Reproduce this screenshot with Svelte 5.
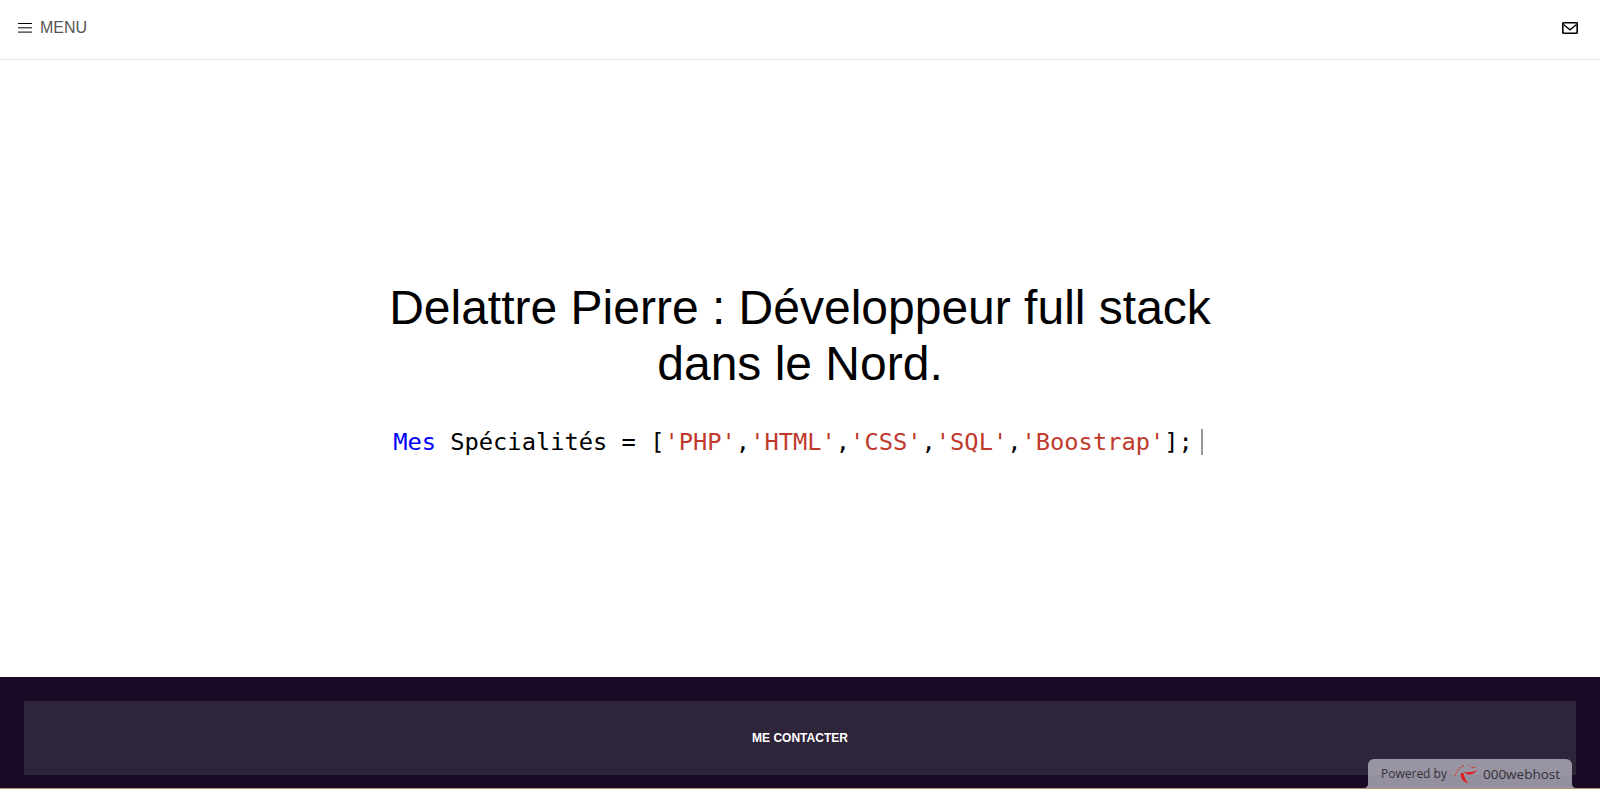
<script>
  // code line tokens
  const items = ['PHP', 'HTML', 'CSS', 'SQL', 'Boostrap'];
</script>

<div class="page">
  <header class="topbar">
    <button class="menu" type="button">
      <svg class="menu__icon" width="14" height="10" viewBox="0 0 14 10" aria-hidden="true">
        <path d="M0 .5h14M0 4.800h14M0 9.100h14" stroke="#000" stroke-width="1" fill="none" />
      </svg>
      <span>MENU</span>
    </button>
    <svg class="mail" width="16" height="12" viewBox="0 0 16 12" aria-hidden="true">
      <rect x=".8" y=".8" width="14.400" height="10.400" rx=".6" fill="none" stroke="#000" stroke-width="1.600" />
      <path d="M1.500 2.500 8 7.800l6.500-5.300" fill="none" stroke="#000" stroke-width="1.400" />
    </svg>
  </header>

  <main class="hero">
    <h1 class="hero__title">Delattre Pierre : Développeur full stack dans le Nord.</h1>
    <p class="hero__code"><span class="kw">Mes</span> Spécialités = [{#each items as item, i}<span class="str">'{item}'</span>{i < items.length - 1 ? ',' : ''}{/each}];<span class="caret"></span></p>
  </main>

  <footer class="footer">
    <a class="footer__button" href="#contact">ME CONTACTER</a>
    <div class="badge">
      <span class="badge__label">Powered by</span>
      <svg class="badge__logo" width="24" height="20" viewBox="0 0 24 20" aria-hidden="true">
        <g fill="#e3201c">
          <path d="M7 9C6 14 9 18 14.500 19.500 11.500 16 10 13 9.500 9Z" />
          <path d="M10 8C13 12 19 11.500 23.500 6 20 7.800 15 8.800 10 8Z" />
          <path d="M16.500 3.500C18.500 4.800 20.500 4.300 22 2.500 20 3.200 18.500 3.500 16.500 3.500Z" />
          <path d="M13 .5C14.500.8 15.500 1.500 16 2.800 15 2 14 1.200 13 .5Z" />
        </g>
        <path d="M10 1.500C5.500 3.500 2 7.500 1 12" fill="none" stroke="#e3201c" stroke-width="1.300" stroke-dasharray="2 1.200" opacity=".75" />
      </svg>
      <span class="badge__name">000webhost</span>
    </div>
  </footer>
  <div class="strip"></div>
</div>

<style>
  :global(body) {
    margin: 0;
    background: #fff;
  }

  .page {
    display: flex;
    flex-direction: column;
    height: 789px;
    overflow: hidden;
  }

  .topbar {
    align-items: center;
    border-bottom: 1px solid #e5e5e5;
    box-sizing: border-box;
    display: flex;
    flex: none;
    height: 60px;
    justify-content: space-between;
    padding: 0 22px 4px 18px;
  }

  .menu {
    align-items: center;
    background: none;
    border: 0;
    color: #555;
    display: flex;
    font-family: "Liberation Sans", Arial, sans-serif;
    font-size: 16px;
    gap: 8px;
    padding: 0;
  }

  .hero {
    align-items: center;
    display: flex;
    flex: 1;
    flex-direction: column;
    justify-content: center;
    padding-top: 1px;
  }

  .hero__title {
    color: #000;
    font-family: "Liberation Sans", Arial, sans-serif;
    font-size: 48px;
    font-weight: 400;
    line-height: 56px;
    margin: 0 0 33px;
    text-align: center;
    width: 840px;
  }

  .hero__code {
    color: #000;
    font-family: "DejaVu Sans Mono", "Liberation Mono", monospace;
    font-size: 23.720px;
    line-height: 34px;
    margin: 0;
    padding-right: 4px;
    white-space: pre;
  }

  .kw { color: #0000ff; }
  .str { color: #c0392b; }

  .caret {
    background: #999;
    display: inline-block;
    height: 26px;
    margin-left: 8px;
    vertical-align: -5px;
    width: 2px;
  }

  .footer {
    background: #1a0b26;
    box-sizing: border-box;
    flex: none;
    height: 111px;
    padding: 24px 24px 13px;
    position: relative;
  }

  .footer__button {
    align-items: center;
    background: #2f253b;
    color: #fff;
    display: flex;
    font-family: "Liberation Sans", Arial, sans-serif;
    font-size: 12px;
    font-weight: 700;
    height: 74px;
    justify-content: center;
    text-decoration: none;
  }

  .badge {
    align-items: center;
    background: rgba(172, 168, 182, 0.85);
    border-radius: 6px 6px 0 0;
    bottom: 0;
    box-sizing: border-box;
    color: #333036;
    display: flex;
    font-family: "Open Sans", sans-serif;
    font-size: 12px;
    gap: 7px;
    height: 29px;
    padding: 0 0 0 13px;
    position: absolute;
    right: 28px;
    white-space: nowrap;
    width: 204px;
  }

  /* flared bottom corners */
  .badge::before,
  .badge::after {
    bottom: 0;
    content: '';
    height: 5px;
    position: absolute;
    width: 5px;
  }

  .badge::before {
    background: radial-gradient(circle at 0 0, transparent 5px, rgba(172, 168, 182, 0.85) 5.500px);
    left: -5px;
  }

  .badge::after {
    background: radial-gradient(circle at 100% 0, transparent 5px, rgba(172, 168, 182, 0.85) 5.500px);
    right: -5px;
  }

  .badge__logo {
    margin-right: -2px;
  }

  .badge__name {
    font-size: 13.500px;
  }

  .strip {
    background: #a8976a;
    flex: none;
    height: 1px;
  }
</style>
